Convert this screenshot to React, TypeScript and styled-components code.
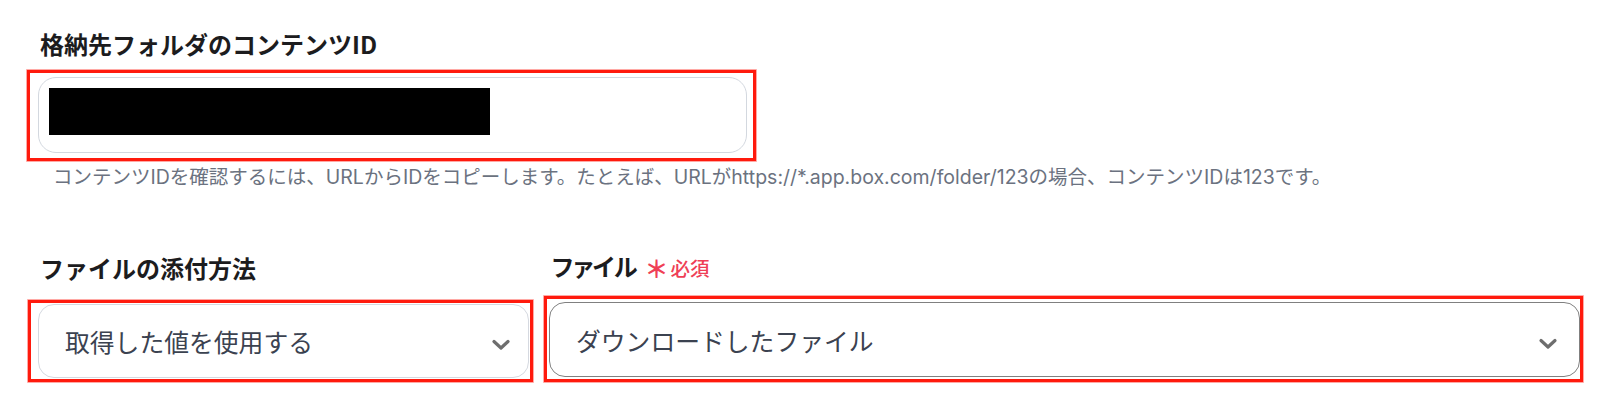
import React from "react";
import styled, { createGlobalStyle } from "styled-components";

const GlobalStyle = createGlobalStyle`
  html, body {
    margin: 0;
    padding: 0;
    background: #ffffff;
  }
  body {
    font-family: Inter, "Noto Sans CJK JP", sans-serif;
    -webkit-font-smoothing: antialiased;
  }
`;

const Page = styled.div`
  box-sizing: border-box;
  width: 1600px;
  height: 415px;
  padding: 28px 0 0 27px;
  overflow: hidden;
`;

const FieldLabel = styled.div<{ $indent: number; $palt?: boolean }>`
  display: flex;
  align-items: baseline;
  gap: 7px;
  padding-left: ${(p) => p.$indent}px;
  font-family: "Noto Sans CJK JP", sans-serif;
  font-size: 24px;
  font-weight: 700;
  line-height: 32px;
  color: #1c1c1e;
  white-space: nowrap;
  font-feature-settings: ${(p) => (p.$palt ? '"palt"' : "normal")};
`;

const Required = styled.span`
  display: inline-flex;
  align-items: baseline;
  gap: 2px;
  color: #ef3f56;
  font-size: 19.5px;
  font-weight: 500;
  font-feature-settings: normal;
`;

const Star = styled.span`
  font-size: 24px;
  font-weight: 700;
  line-height: 1;
  position: relative;
  top: 2px;
`;

const Highlight = styled.div<{
  $pad: string;
  $offset?: number;
  $top?: number;
}>`
  box-sizing: border-box;
  width: max-content;
  border: 3px solid #ff1a0d;
  box-shadow: 0 0 0 0.8px rgba(255, 40, 30, 0.5);
  padding: ${(p) => p.$pad};
  margin-left: ${(p) => p.$offset ?? 0}px;
  margin-top: ${(p) => p.$top ?? 0}px;
`;

const TextInput = styled.div`
  box-sizing: border-box;
  width: 709px;
  height: 76px;
  border: 1.5px solid #d3d8df;
  border-radius: 18px;
  padding: 9.5px 0 0 9.5px;
  background: #fff;
`;

const Redaction = styled.div`
  width: 441px;
  height: 47px;
  background: #000;
`;

const Help = styled.p`
  margin: 4px 0 0 26px;
  font-size: 19.5px;
  line-height: 24px;
  color: #6b7280;
  white-space: nowrap;
`;

const Row = styled.div`
  display: grid;
  grid-template-columns: 506px 1039px;
  column-gap: 11px;
  row-gap: 12px;
  margin-top: 61px;
  align-items: end;
`;

const Select = styled.div<{ $w: number; $h: number; $dark?: boolean; $pr: number }>`
  box-sizing: border-box;
  width: ${(p) => p.$w}px;
  height: ${(p) => p.$h}px;
  display: flex;
  align-items: center;
  justify-content: space-between;
  padding: 0 ${(p) => p.$pr}px 0 26px;
  border: 1.5px solid ${(p) => (p.$dark ? "#808080" : "#d5d9e0")};
  border-radius: 16px;
  background: #fff;
  font-family: "Noto Sans CJK JP", sans-serif;
  font-size: 24.8px;
  font-weight: 400;
  color: #3b4250;
  white-space: nowrap;
`;

const ChevronIcon = styled.svg`
  flex: none;
  margin-top: 9.5px;
`;

const Chevron = () => (
  <ChevronIcon width="20" height="12" viewBox="0 0 20 12" fill="none">
    <polyline
      points="3,2.5 10,9 17,2.5"
      stroke="#6e6e6e"
      strokeWidth="3.2"
      strokeLinecap="round"
      strokeLinejoin="round"
    />
  </ChevronIcon>
);

export default function App() {
  return (
    <>
      <GlobalStyle />
      <Page>
        <FieldLabel $indent={13}>格納先フォルダのコンテンツID</FieldLabel>
        <Highlight $pad="4px 6px 5px 8px" $top={10}>
          <TextInput>
            <Redaction />
          </TextInput>
        </Highlight>
        <Help>
          コンテンツIDを確認するには、URLからIDをコピーします。たとえば、URLがhttps://*.app.box.com/folder/123の場合、コンテンツIDは123です。
        </Help>
        <Row>
          <FieldLabel $indent={13}>ファイルの添付方法</FieldLabel>
          <FieldLabel $indent={8} $palt>
            ファイル
            <Required>
              <Star>＊</Star>必須
            </Required>
          </FieldLabel>
          <Highlight $pad="1px 1px 1px 7px" $offset={1}>
            <Select $w={491} $h={74} $pr={17}>
              取得した値を使用する
              <Chevron />
            </Select>
          </Highlight>
          <Highlight $pad="3px 0 1.5px 2px">
            <Select $w={1031} $h={75} $pr={21.5} $dark>
              ダウンロードしたファイル
              <Chevron />
            </Select>
          </Highlight>
        </Row>
      </Page>
    </>
  );
}
